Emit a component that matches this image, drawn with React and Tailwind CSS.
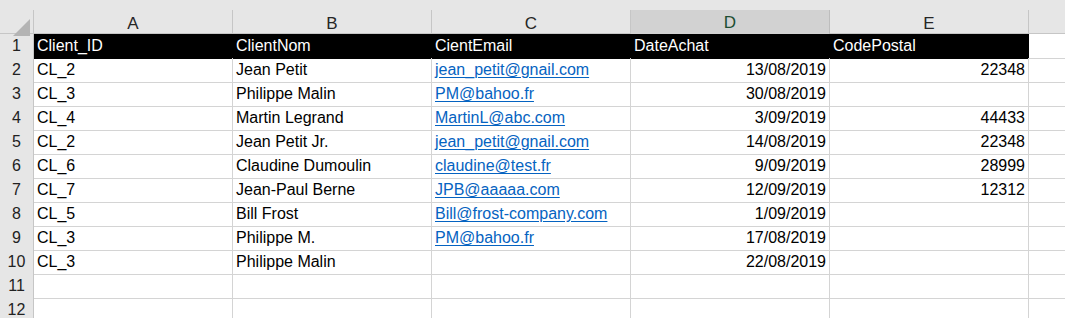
import React from 'react';

const cols = ['A', 'B', 'C', 'D', 'E'];

const rows = [
  ['CL_2', 'Jean Petit', 'jean_petit@gnail.com', '13/08/2019', '22348'],
  ['CL_3', 'Philippe Malin', 'PM@bahoo.fr', '30/08/2019', ''],
  ['CL_4', 'Martin Legrand', 'MartinL@abc.com', '3/09/2019', '44433'],
  ['CL_2', 'Jean Petit Jr.', 'jean_petit@gnail.com', '14/08/2019', '22348'],
  ['CL_6', 'Claudine Dumoulin', 'claudine@test.fr', '9/09/2019', '28999'],
  ['CL_7', 'Jean-Paul Berne', 'JPB@aaaaa.com', '12/09/2019', '12312'],
  ['CL_5', 'Bill Frost', 'Bill@frost-company.com', '1/09/2019', ''],
  ['CL_3', 'Philippe M.', 'PM@bahoo.fr', '17/08/2019', ''],
  ['CL_3', 'Philippe Malin', '', '22/08/2019', ''],
  ['', '', '', '', ''],
  ['', '', '', '', ''],
];

const headers = ['Client_ID', 'ClientNom', 'CientEmail', 'DateAchat', 'CodePostal'];

const gridCols = 'grid grid-cols-[34px_199px_199px_199px_199px_199px_1fr]';

const App = () => {
  return (
    <div className="w-[1065px] h-[318px] overflow-hidden bg-white text-black" style={{ fontFamily: '"Liberation Sans", Arial, sans-serif' }}>
      <div className="h-[10px] bg-[#e6e6e6]" />
      <div className={`${gridCols} h-[24px] bg-[#e6e6e6] border-b border-[#c6c6c6]`}>
        <div className="relative border-r border-[#c6c6c6]">
          <div className="absolute right-[3px] bottom-[2px] w-0 h-0 border-l-[17px] border-l-transparent border-b-[17px] border-b-[#b4b4b4]" />
        </div>
        {cols.map((c) => (
          <div
            key={c}
            className={`flex items-center justify-center text-[17px] border-r ${c === 'D' ? 'bg-[#d2d2d2] border-[#bdbdbd] border-b-2 border-b-[#217346] text-[#1e4e33]' : 'border-[#c6c6c6] text-[#262626]'}`}
          >
            {c}
          </div>
        ))}
        <div />
      </div>

      <div className={`${gridCols} h-[24px]`}>
        <div className="flex items-center justify-center bg-[#e6e6e6] border-r border-b border-[#c6c6c6] text-[16px] text-[#222]">1</div>
        {headers.map((h) => (
          <div key={h} className="bg-black text-white flex items-center pl-[3px] text-[16px] border-b border-black">
            {h}
          </div>
        ))}
        <div className="border-b border-[#d4d4d4]" />
      </div>

      {rows.map((r, i) => (
        <div key={i} className={`${gridCols} h-[24px]`}>
          <div className="flex items-center justify-center bg-[#e6e6e6] border-r border-b border-[#c6c6c6] text-[16px] text-[#222]">
            {i + 2}
          </div>
          {r.map((v, j) => (
            <div
              key={j}
              className={`flex items-center text-[16px] border-r border-b border-[#d4d4d4] whitespace-nowrap ${j >= 3 ? 'justify-end pr-[3px]' : 'pl-[3px]'}`}
            >
              {j === 2 && v ? <span className="text-[#0563c1] underline underline-offset-2">{v}</span> : v}
            </div>
          ))}
          <div className="border-b border-[#d4d4d4]" />
        </div>
      ))}
    </div>
  );
};

export default App;
